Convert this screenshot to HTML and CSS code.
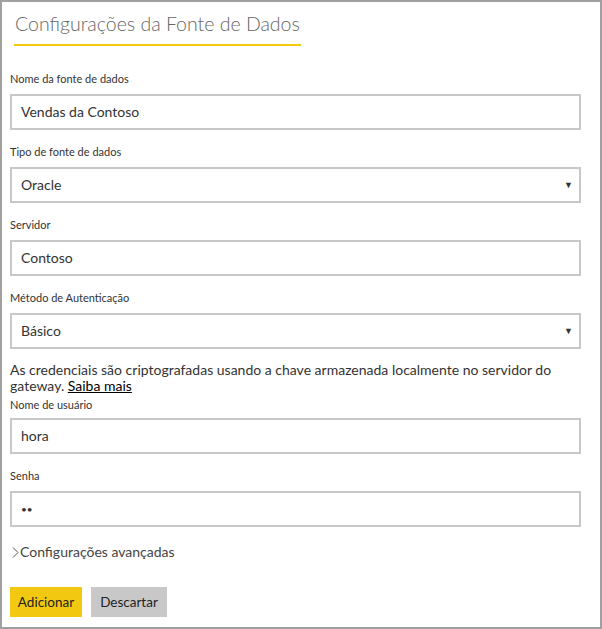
FILE: index.html
```html
<!DOCTYPE html>
<html lang="pt">
<head>
<meta charset="utf-8">
<link rel="stylesheet" href="styles.css">
</head>
<body>
<div class="panel">
  <div class="title-wrap"><h1 class="title">Configurações da Fonte de Dados</h1></div>
  <div class="field first">
    <div class="label">Nome da fonte de dados</div>
    <div class="box">Vendas da Contoso</div>
  </div>
  <div class="field">
    <div class="label">Tipo de fonte de dados</div>
    <div class="box select">Oracle<span class="arrow">▼</span></div>
  </div>
  <div class="field">
    <div class="label">Servidor</div>
    <div class="box">Contoso</div>
  </div>
  <div class="field">
    <div class="label">Método de Autenticação</div>
    <div class="box select">Básico<span class="arrow">▼</span></div>
  </div>
  <p class="note"><span class="note-line">As credenciais são criptografadas usando a chave armazenada localmente no servidor do</span><span class="note-line">gateway. <a class="link">Saiba mais</a></span></p>
  <div class="field tight">
    <div class="label">Nome de usuário</div>
    <div class="box">hora</div>
  </div>
  <div class="field">
    <div class="label">Senha</div>
    <div class="box pw">••</div>
  </div>
  <div class="advanced"><svg class="chev" width="7" height="11" viewBox="0 0 7 11"><path d="M1 0.5 L6 5.5 L1 10.5" fill="none" stroke="#555" stroke-width="1"/></svg>Configurações avançadas</div>
  <div class="buttons">
    <button class="btn primary">Adicionar</button>
    <button class="btn secondary">Descartar</button>
  </div>
</div>
</body>
</html>
```
FILE: styles.css
```css
html, body { margin: 0; padding: 0; background: #fff; }
body { font-family: "Lato", "Noto Sans", sans-serif; color: #333; }
.panel {
  box-sizing: border-box;
  width: 602px;
  height: 629px;
  border: 2px solid #a0a0a0;
  padding: 0 19px 0 8px;
}
.title-wrap { padding: 8px 0 0 4px; }
.title {
  display: inline-block;
  margin: 0;
  font-weight: 300;
  font-size: 19.5px;
  line-height: 28px;
  color: #666;
  padding: 0 1px 6px 1px;
  border-bottom: 2px solid #f2c811;
}
.field { margin-top: 14px; }
.field.first { margin-top: 25px; }
.field.tight { margin-top: 3px; }
.label { font-size: 11px; line-height: 16px; color: #333; margin-bottom: 7px; }
.field.tight .label { margin-bottom: 5px; }
.box {
  box-sizing: border-box;
  height: 36px;
  border: 2px solid #c8c8c8;
  padding: 0 9px;
  font-size: 14px;
  line-height: 32px;
  color: #333;
  position: relative;
}
.arrow { position: absolute; right: 6px; top: 0; font-size: 9px; color: #333; }
.pw { font-size: 10px; }
.note { margin: 13px 0 0; font-size: 14px; line-height: 16px; color: #333; }
.note-line { display: block; white-space: nowrap; }
.link { color: #000; text-decoration: underline; }
.advanced { margin-top: 16px; font-size: 14px; line-height: 18px; color: #444; display: flex; align-items: center; }
.chev { margin: 0 1px 0 2px; }
.buttons { margin-top: 26px; display: flex; gap: 9px; }
.btn {
  font-family: inherit;
  border: none;
  height: 30px;
  font-size: 13.5px;
  color: #222;
  padding: 0;
}
.primary { background: #f2c811; width: 72px; }
.secondary { background: #c8c8c8; width: 76px; }
```
